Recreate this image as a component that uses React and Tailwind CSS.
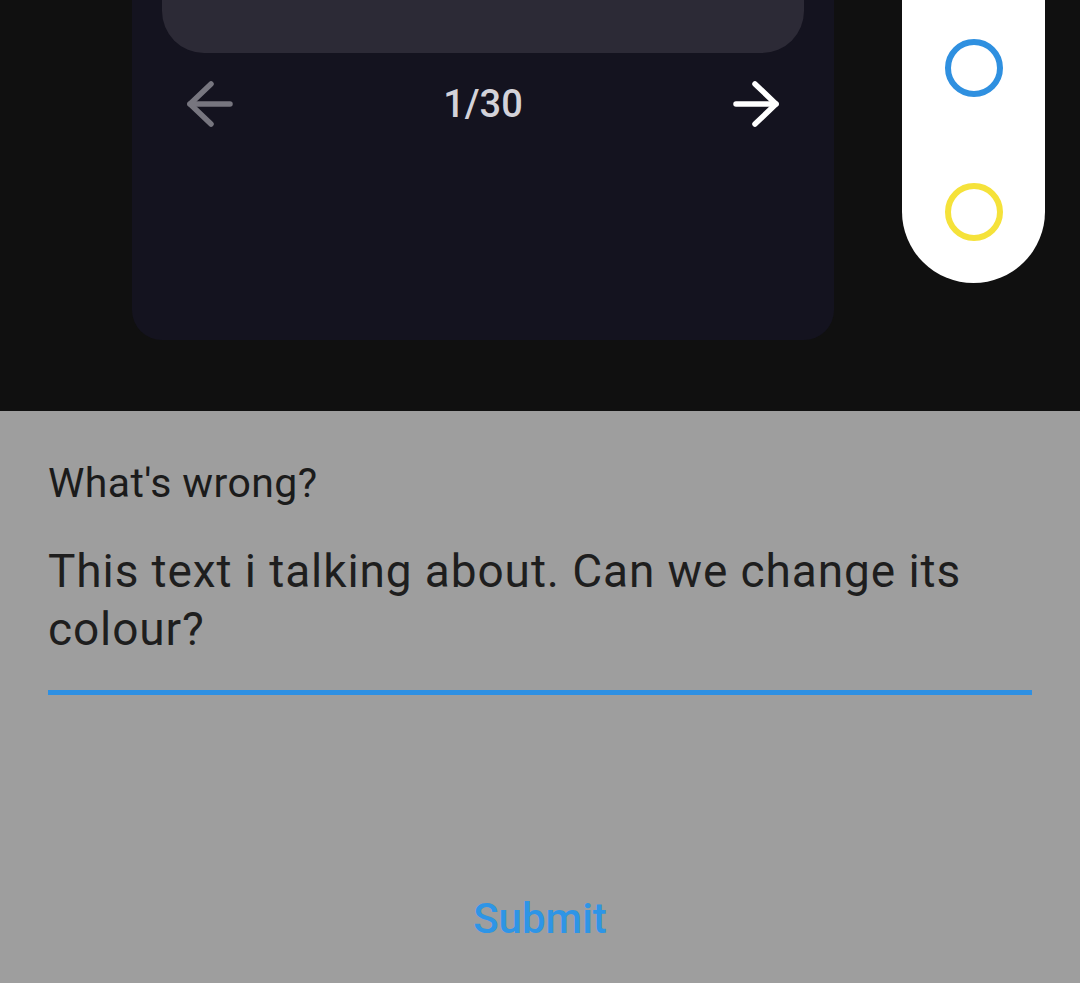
import React, { useState } from "react";

const ArrowIcon = ({ dir = "left", className = "" }) => (
	<svg
		className={className}
		width="46"
		height="46"
		viewBox="0 0 46 46"
		fill="none"
		stroke="currentColor"
		strokeWidth="5.5"
		strokeLinecap="round"
		strokeLinejoin="round"
	>
		{dir === "left" ? (
			<>
				<path d="M3 23H43" />
				<path d="M24 3L3 23L24 43" />
			</>
		) : (
			<>
				<path d="M3 23H43" />
				<path d="M22 3L43 23L22 43" />
			</>
		)}
	</svg>
);

const Ring = ({ color }) => (
	<div className={`w-[58px] h-[58px] rounded-full border-[6px] ${color}`}></div>
);

const App = () => {
	const [page] = useState(1);
	const [comment, setComment] = useState(
		"This text i talking about. Can we change its colour?",
	);

	return (
		<div className="w-[1080px] h-[983px] flex flex-col font-['Roboto',sans-serif] overflow-hidden">
			{/* Top: card preview + color picker */}
			<div className="h-[411px] bg-[#101010] flex items-start">
				<div className="ml-[132px] w-[702px] h-[340px] bg-[#14131f] rounded-b-[30px] px-[30px] flex flex-col">
					<div className="h-[53px] bg-[#2c2a36] rounded-b-[42px]"></div>
					<div className="mt-[27px] px-[25px] flex items-center justify-between h-[48px]">
						<ArrowIcon dir="left" className="text-[#77767f]" />
						<span className="text-[38px] leading-none font-medium text-[#d3d2d9]">
							{page}/30
						</span>
						<ArrowIcon dir="right" className="text-white" />
					</div>
				</div>

				<div className="ml-[68px] w-[143px] h-[283px] bg-white rounded-b-full flex flex-col items-center pt-[39px] gap-[86px]">
					<Ring color="border-[#2f90e0]" />
					<Ring color="border-[#f5e23a]" />
				</div>
			</div>

			{/* Bottom sheet: feedback form */}
			<div className="h-[572px] bg-[#9e9e9e] px-[48px] pt-[50px] flex flex-col">
				<label className="text-[41px] leading-[44px] tracking-[0.4px] text-[#1b1b1b]">
					What's wrong?
				</label>
				<div className="mt-[37px] text-[46px] leading-[58px] tracking-[0.9px] text-[#1e1e1e]">
					{comment}
				</div>
				<div className="mt-[32px] h-[5px] bg-[#2e90e3]"></div>
				<div className="mt-[200px] flex justify-center">
					<button
						onClick={() => setComment(comment)}
						className="text-[42px] leading-[48px] font-medium text-[#2e95e6]"
					>
						Submit
					</button>
				</div>
			</div>
		</div>
	);
};

export default App;
